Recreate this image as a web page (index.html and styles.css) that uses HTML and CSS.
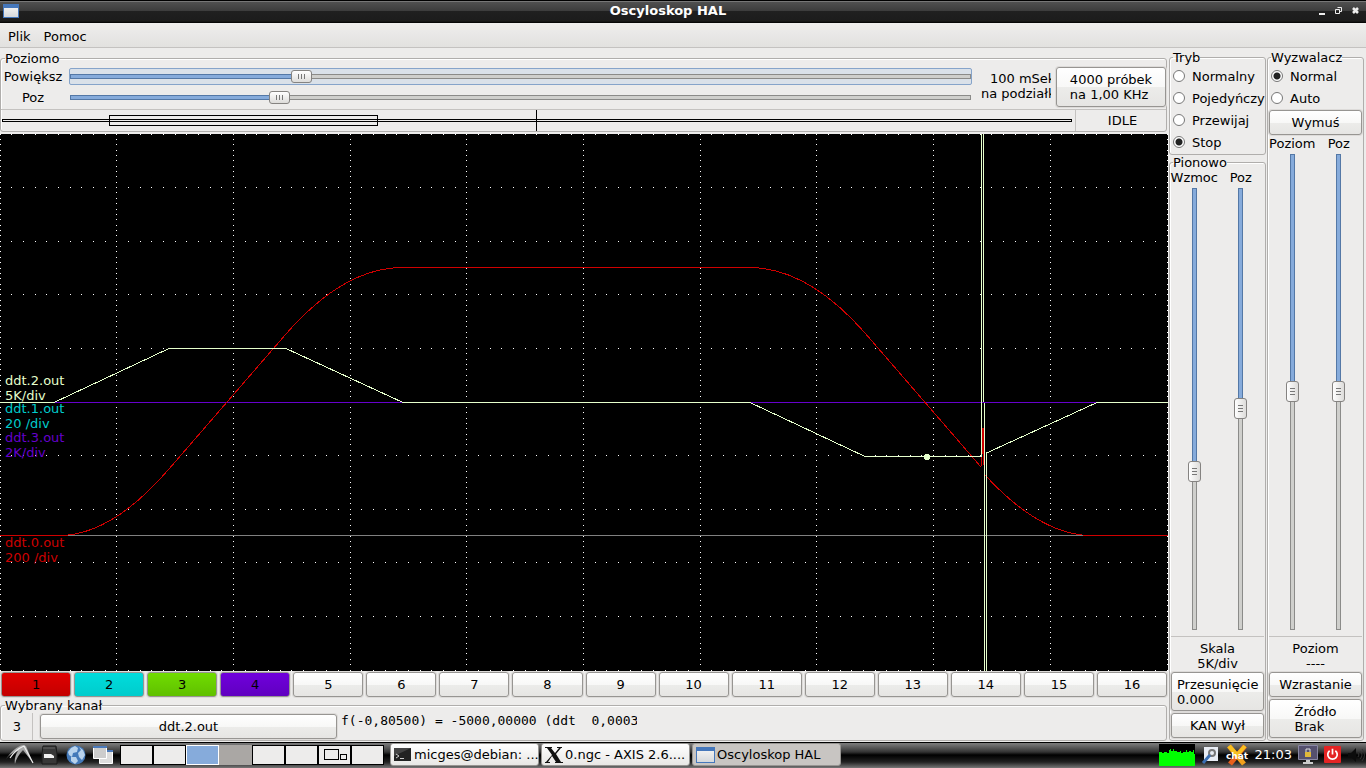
FILE: index.html
```html
<!DOCTYPE html>
<html lang="pl">
<head>
<meta charset="utf-8">
<title>Oscyloskop HAL</title>
<link rel="stylesheet" href="styles.css">
</head>
<body>
<header class="titlebar">
  <span class="win-icon"></span>
  <h1 class="title">Oscyloskop HAL</h1>
  <div class="win-buttons">
    <button class="win-btn" aria-label="Minimalizuj"><svg width="9" height="9" viewBox="0 0 9 9"><path d="M2 7h6v2H2z" fill="#eee"/></svg></button>
    <button class="win-btn" aria-label="Przywróć"><svg width="9" height="9" viewBox="0 0 9 9"><path d="M3.500 1.500h4v4h-2M1.500 3.500h4v4h-4z" fill="none" stroke="#eee"/></svg></button>
    <button class="win-btn" aria-label="Zamknij"><svg width="9" height="9" viewBox="0 0 9 9"><path d="M2 2l5 5M7 2l-5 5" stroke="#eee" stroke-width="2.600"/></svg></button>
  </div>
</header>
<nav class="menubar">
  <button class="menu">Plik</button>
  <button class="menu">Pomoc</button>
</nav>
<main class="workspace">
  <section class="left">
    <fieldset class="group horizontal">
      <legend>Poziomo</legend>
      <div class="horiz-top">
        <div class="horiz-sliders">
          <label for="zoom">Powiększ</label>
          <span class="focus"><input class="hs" id="zoom" type="range" min="0" max="1000" value="250" style="--fill:26%"></span>
          <label for="hpos">Poz</label>
          <span class="nofocus"><input class="hs" id="hpos" type="range" min="0" max="1000" value="225" style="--fill:23%"></span>
        </div>
        <div class="timebase"><span>100 mSek</span><span>na podziałkę</span></div>
        <button class="btn samples"><span>4000 próbek<br>na 1,00 KHz</span></button>
      </div>
      <div class="horiz-bottom">
        <div class="record">
          <svg class="record-svg" viewBox="0 0 1074 23" preserveAspectRatio="none" shape-rendering="crispEdges">
            <path d="M1.500 9.500h1069v2h-1069zM108.500 5.500h268v10h-268zM535.500 0v21" fill="none" stroke="#000"/>
          </svg>
        </div>
        <div class="state">IDLE</div>
      </div>
    </fieldset>
    <div class="scope">
      <svg class="scope-svg" viewBox="0 0 1168 537" preserveAspectRatio="none" shape-rendering="crispEdges">
        <path id="grid" fill="none" stroke="#fff"/>
        <path d="M0 401.500H1168" fill="none" stroke="#808080"/>
        <path d="M0 268.500H1168" fill="none" stroke="#6600cc"/>
        <path d="M0 401.500H60Q112 401 169 335L286 200Q344 133.500 403 133.500H750Q808 134 865 199L981 333L982 295V320L983 294V320L985 341Q1040 401 1091 401.500" fill="none" stroke="#d00000"/>
        <path d="M1085 401.500H1168" fill="none" stroke="#d00000"/>
        <path d="M0 268.500H54L169 214.500H286L403 268.500H750L865 322.500H981.500V0M983.500 0V268M984.500 269V537M986.500 537V319L1097 268.500H1168" fill="none" stroke="#e6ffcc"/>
        <circle cx="927" cy="323" r="3" fill="#e6ffcc"/>
      </svg>
      <div class="traces">
        <div class="trace t2">ddt.2.out<br>5K/div</div>
        <div class="trace t1">ddt.1.out<br>20 /div</div>
        <div class="trace t3">ddt.3.out<br>2K/div</div>
        <div class="trace t0">ddt.0.out<br>200 /div</div>
      </div>
    </div>
    <div class="channels">
      <button class="btn c1">1</button><button class="btn c2">2</button><button class="btn c3">3</button><button class="btn c4">4</button><button class="btn">5</button><button class="btn">6</button><button class="btn">7</button><button class="btn">8</button><button class="btn">9</button><button class="btn">10</button><button class="btn">11</button><button class="btn">12</button><button class="btn">13</button><button class="btn">14</button><button class="btn">15</button><button class="btn">16</button>
    </div>
    <fieldset class="group selected">
      <legend>Wybrany kanał</legend>
      <div class="selected-row">
        <span class="number">3</span>
        <button class="btn source">ddt.2.out</button>
        <output class="readout">f(-0,80500) = -5000,00000 (ddt  0,0003)</output>
      </div>
    </fieldset>
  </section>
  <aside class="mid">
    <fieldset class="group mode">
      <legend>Tryb</legend>
      <label class="radio"><input type="radio" name="mode">Normalny</label>
      <label class="radio"><input type="radio" name="mode">Pojedyńczy</label>
      <label class="radio"><input type="radio" name="mode">Przewijaj</label>
      <label class="radio"><input type="radio" name="mode" checked>Stop</label>
    </fieldset>
    <fieldset class="group vertical">
      <legend>Pionowo</legend>
      <div class="vsliders">
        <div class="vcol"><label for="gain">Wzmoc</label><input class="vs" id="gain" type="range" min="0" max="1000" value="649" style="--fill:64%"></div>
        <div class="vcol"><label for="vpos">Poz</label><input class="vs" id="vpos" type="range" min="0" max="1000" value="498" style="--fill:50%"></div>
      </div>
      <div class="value">Skala<br>5K/div</div>
      <button class="btn tall left-text"><span>Przesunięcie<br>0.000</span></button>
      <button class="btn">KAN Wył</button>
    </fieldset>
  </aside>
  <aside class="right">
    <fieldset class="group trigger">
      <legend>Wyzwalacz</legend>
      <label class="radio"><input type="radio" name="trig" checked>Normal</label>
      <label class="radio"><input type="radio" name="trig">Auto</label>
      <button class="btn force">Wymuś</button>
      <div class="vsliders">
        <div class="vcol"><label for="tlevel">Poziom</label><input class="vs" id="tlevel" type="range" min="0" max="1000" value="499" style="--fill:50%"></div>
        <div class="vcol"><label for="tpos">Poz</label><input class="vs" id="tpos" type="range" min="0" max="1000" value="499" style="--fill:50%"></div>
      </div>
      <div class="value">Poziom<br>----</div>
      <button class="btn">Wzrastanie</button>
      <button class="btn tall"><span>Źródło<br>Brak</span></button>
    </fieldset>
  </aside>
</main>
<footer class="taskbar">
  <div class="launchers">
    <button class="launch" aria-label="Menu"><svg width="32" height="22" viewBox="0 0 32 22"><path d="M4 15C9 8 15 2 21 1L24 2L31 19L21 6C17 10 14 15 13 20C12 15 14 10 16 7C11 8 7 11 4 15Z" fill="#a8a8a8"/><path d="M8 14C12 8 17 4 22 2L31 19" fill="none" stroke="#eee" stroke-width="1.200"/></svg></button>
    <button class="launch" aria-label="Pliki"><svg width="18" height="20" viewBox="0 0 18 20"><path d="M2 1h13l1 8v10H1V9z" fill="#383838" stroke="#1a1a1a"/><path d="M2 3h12" stroke="#666"/><path d="M3 13V9h7l3 2v2z" fill="#f2f2f2"/></svg></button>
    <button class="launch" aria-label="Przeglądarka"><svg width="20" height="20" viewBox="0 0 20 20"><circle cx="10" cy="10" r="9.500" fill="#4479b9"/><path d="M2 7l3-4 4-2 3 2-1 4-4 1-1 4-3-2zM13 2l4 3 2 5-3 5-3-3-1-4 3-3zM5 12l5 0 2 4-3 3-4-3z" fill="#b8d2ec"/></svg></button>
    <button class="launch" aria-label="Pulpit"><svg width="20" height="18" viewBox="0 0 20 18"><path d="M6.500 5.500h13v12h-13z" fill="#ddd" stroke="#fff"/><path d="M6 4h14v2H6z" fill="#4b7abb"/><path d="M.500.500h13v12H.500z" fill="#ccc" stroke="#fff"/><path d="M0 0h14v2H0z" fill="#4b7abb"/></svg></button>
  </div>
  <div class="pager">
    <button class="desk" aria-label="1"></button><button class="desk" aria-label="2"></button><button class="desk current" aria-label="3"></button><button class="desk busy" aria-label="4"></button><button class="desk" aria-label="5"></button><button class="desk" aria-label="6"></button><button class="desk" aria-label="7"><svg width="26" height="14" viewBox="0 0 26 14" shape-rendering="crispEdges"><path d="M2.500 1.500h14v10h-14zM18.500 6.500h6v5h-6z" fill="none" stroke="#000"/></svg></button><button class="desk" aria-label="8"></button>
  </div>
  <div class="tasks">
    <button class="task"><svg width="18" height="16" viewBox="0 0 18 16"><path d="M0 1h17v13H0z" fill="#222"/><path d="M0 1h17L0 9z" fill="#444"/><path d="M2 7l3 2-3 2M6 11.500h4" fill="none" stroke="#ccc"/></svg><span>micges@debian: ...</span></button>
    <button class="task"><svg width="18" height="18" viewBox="0 0 18 18"><path d="M0 1h7v1H6l4 5 4-5h-2V1h5v1h-1l-5 6 5 8h2v1h-8v-1h1l-4-6-4 6h2v1H0v-1h1l6-7-5-7H0z" fill="#111"/></svg><span>0.ngc - AXIS 2.6....</span></button>
    <button class="task active"><span class="win-icon wide"></span><span>Oscyloskop HAL</span></button>
  </div>
  <div class="tray">
    <svg width="36" height="22" viewBox="0 0 36 22" shape-rendering="crispEdges"><path d="M0 0h36v22H0z"/><path d="M0 8h3v1h2V8h3v1h2V6h1V5h1v2h2V5h1v2h3v1h3V7h1v2h2V8h3V6h1v2h2V7h2v1h2V6h1v4h1v12H0z" fill="#0f0"/></svg>
    <svg width="18" height="18" viewBox="0 0 18 18"><path d="M3 1h14v14H3z" fill="#e8ecf4"/><circle cx="11" cy="7" r="3" fill="none" stroke="#777" stroke-width="2"/><path d="M9 9l-7 8" stroke="#3b6fb3" stroke-width="3"/></svg>
    <svg width="24" height="22" viewBox="0 0 24 22"><path d="M20 2L5 20" stroke="#e8601c" stroke-width="5"/><path d="M4 2l15 18" stroke="#f2a01c" stroke-width="5"/><path d="M4 2l8 9L20 2" fill="none" stroke="#f8c020" stroke-width="4"/><text x="12" y="15" text-anchor="middle" class="chat">chat</text></svg>
    <time class="clock">21:03</time>
    <svg width="20" height="20" viewBox="0 0 20 20"><path d="M.500.500h19v14H.500z" fill="#55506e" stroke="#8a88a4"/><path d="M7 7h6v5H7z" fill="#e0b83a"/><path d="M8 7V4h4v3" fill="none" stroke="#ddd"/><path d="M8 15h4v2h3v2H5v-2h3z" fill="#ccc"/></svg>
    <svg width="17" height="17" viewBox="0 0 18 18"><rect width="18" height="18" rx="1" fill="#e42424"/><path d="M6 5a5 5 0 1 0 6 0M9 3v6" fill="none" stroke="#fff" stroke-width="1.800"/></svg>
    <svg width="18" height="16" viewBox="0 0 18 16"><path d="M1 6h3l5-5v14l-5-5H1z" fill="#0c0c0c"/><path d="M11 6q2 2 0 4M13 4q4 4 0 8M15 2q5 6 0 12" fill="none" stroke="#333"/></svg>
  </div>
</footer>
<script src="grid.js"></script>
</body>
</html>
```
FILE: grid.js
```js
// Graticule: 10 x 10 divisions, ten dots per division.
const w = 1167, h = 536;
let d = "";
for (let line = 0; line <= 10; line++) {
  const y = Math.floor(line * h / 10) + 0.5;
  const x = Math.floor(line * w / 10);
  for (let dot = 0; dot <= 100; dot++) {
    d += `M${Math.floor(dot * w / 100)} ${y}h1`;
    d += `M${x} ${Math.floor(dot * h / 100) + 0.5}h1`;
  }
}
document.getElementById("grid").setAttribute("d", d);
```
FILE: styles.css
```css
* { box-sizing: border-box; }
body {
  margin: 0;
  height: 100vh;
  display: flex;
  flex-direction: column;
  overflow: hidden;
  background: #edeceb;
  color: #000;
  font: 13px/15px "DejaVu Sans", sans-serif;
}
button { font: inherit; color: inherit; padding: 0; margin: 0; border: 0; background: none; }
svg { display: block; flex: none; }

.titlebar {
  flex: none;
  height: 23px;
  display: flex;
  align-items: center;
  padding: 0 6px 2px 3px;
  background: linear-gradient(#000 0 1px, #777 1px 2px, #505050 2px, #3c3c3c 11px, #202020 11px, #1c1c1c 21px, #000);
}
.win-icon {
  flex: none;
  width: 16px;
  height: 14px;
  border: 1px solid #4577bb;
  background: linear-gradient(#4577bb 0 3px, #f0f0f0 3px, #d5d8dc);
}
.wide { width: 19px; height: 16px; }
.title { flex: 1; margin: 0; text-align: center; color: #fff; font-size: 13px; font-weight: bold; }
.win-buttons { display: flex; gap: 8px; }

.menubar {
  flex: none;
  height: 25px;
  display: flex;
  align-items: center;
  gap: 13px;
  padding: 2px 0 0 8px;
  border-bottom: 1px solid #c4c2c0;
  background: linear-gradient(#efeeed, #e2e1df);
}

.workspace {
  flex: 1;
  min-height: 0;
  display: grid;
  grid-template-columns: minmax(0, 1fr) 97px 97px;
  gap: 0 1px;
  padding: 2px 2px 1px 0;
}
.left, .mid, .right { display: flex; flex-direction: column; min-width: 0; min-height: 0; }
.group {
  margin: 0;
  padding: 0 1px;
  min-width: 0;
  border: 1px solid #b0aeac;
  border-radius: 3px;
  box-shadow: inset 1px 1px #fff;
}
.group legend { padding: 0; margin-left: 2px; }
.btn {
  flex: none;
  height: 25px;
  border: 1px solid #979592;
  border-radius: 3px;
  background: linear-gradient(#fff, #f8f8f7 50%, #ececea 51%, #e6e5e3);
  box-shadow: 0 0 0 1px #dddbd9;
  text-align: center;
}
.btn span { display: inline-block; text-align: left; }

.horizontal { flex: none; height: 81px; margin-top: 1px; margin-right: 1px; padding: 0; }
.horizontal legend { margin-left: 4px; }
.horiz-top { display: flex; height: 43px; }
.horiz-sliders {
  flex: 1;
  display: grid;
  grid-template-columns: 65px 1fr;
  grid-template-rows: 20px 22px;
  align-items: center;
  text-align: center;
}
.horiz-sliders label { margin-right: 1px; }
.focus, .nofocus { display: flex; padding: 0 1px; margin-left: 3px; }
.focus { border: 1px solid #86a4ca; border-radius: 2px; background: #dae1e9; height: 17px; align-items: center; padding: 0; }
.timebase { flex: none; width: 70px; margin: 5px 5px 0 9px; overflow: hidden; white-space: nowrap; }
.timebase span { display: block; }
.timebase span:first-child { padding-left: 9px; }
.samples { width: 110px; height: 40px; margin-top: 1px; }
.horiz-bottom { display: flex; height: 22px; border-top: 1px solid #c4c2c0; }
.record { flex: 1; min-width: 0; }
.record-svg { width: 100%; height: 23px; }
.state { width: 91px; padding-top: 3px; padding-left: 3px; text-align: center; border-left: 1px solid #c4c2c0; }

input[type=range] { appearance: none; margin: 0; background: none; }
.hs { width: 100%; height: 14px; }
.hs::-webkit-slider-runnable-track {
  height: 5px;
  border: 1px solid transparent;
  background:
    linear-gradient(to right, #86abdb var(--fill), #cfcfcc var(--fill)) padding-box,
    linear-gradient(to right, #5478a6 var(--fill), #8b8b89 var(--fill)) border-box;
}
.hs::-webkit-slider-thumb {
  appearance: none;
  width: 21px;
  height: 13px;
  margin-top: -5px;
  border: 1px solid #858381;
  border-radius: 3px;
  background:
    repeating-linear-gradient(to right, #777 0 1px, transparent 1px 3px) 6px 3px / 7px 5px no-repeat,
    linear-gradient(#fff, #dddcda);
}
.vs { flex: 1; min-height: 0; width: 14px; writing-mode: vertical-lr; }
.vs::-webkit-slider-runnable-track {
  width: 5px;
  border: 1px solid transparent;
  background:
    linear-gradient(#86abdb var(--fill), #cfcfcc var(--fill)) padding-box,
    linear-gradient(#5478a6 var(--fill), #8b8b89 var(--fill)) border-box;
}
.vs::-webkit-slider-thumb {
  appearance: none;
  width: 13px;
  height: 21px;
  margin-left: -5px;
  border: 1px solid #858381;
  border-radius: 3px;
  background:
    repeating-linear-gradient(#777 0 1px, transparent 1px 3px) 3px 6px / 5px 7px no-repeat,
    linear-gradient(to right, #fff, #dddcda);
}

.scope { flex: 1; min-height: 0; position: relative; margin-top: 2px; background: #000; }
.scope-svg { width: 100%; height: 100%; }
.traces { position: absolute; inset: 0; }
.trace { position: absolute; left: 5px; }
.t2 { top: 44.500%; color: #e6ffcc; }
.t1 { top: 49.700%; color: #00cccc; }
.t3 { top: 55.100%; color: #6600cc; }
.t0 { top: 74.600%; color: #cc0000; }

.channels { flex: none; display: grid; grid-template-columns: repeat(16, 1fr); gap: 3px; padding: 1px; }
.c1 { background: linear-gradient(#e00000, #c40000); }
.c2 { background: linear-gradient(#00dcdc, #00cccc); }
.c3 { background: linear-gradient(#70dc00, #60c000); }
.c4 { background: linear-gradient(#7000dc, #6000c0); }

.selected { flex: none; height: 43px; margin-right: 1px; }
.selected legend { margin-left: 3px; }
.selected-row { display: flex; height: 27px; }
.number { width: 31px; padding-top: 6px; text-align: center; border-right: 1px solid #c4c2c0; }
.source { width: 297px; margin-left: 7px; margin-top: 1px; }
.readout { width: 296px; margin-left: 4px; overflow: hidden; white-space: pre; font: 13px/15px "DejaVu Sans Mono", monospace; }

.mode { flex: none; height: 105px; }
.radio { display: flex; align-items: center; gap: 7px; height: 22px; white-space: nowrap; }
.radio input { appearance: none; flex: none; width: 12px; height: 12px; margin: 0 0 0 2px; border: 1px solid #777; border-radius: 50%; background: #fff; }
.radio input:checked { background: radial-gradient(circle, #222 0 3px, #fff 4px); }
.force { margin-top: 1px; margin-bottom: 1px; }
.vertical, .trigger { flex: 1; min-height: 0; display: flex; flex-direction: column; padding-bottom: 2px; }
.vsliders { flex: 1; min-height: 0; display: grid; grid-template-columns: 1fr 1fr; grid-template-rows: minmax(0, 1fr); }
.vcol { display: flex; flex-direction: column; align-items: center; gap: 3px; min-height: 0; min-width: 0; }
.value { flex: none; height: 36px; margin-top: 6px; padding-top: 4px; text-align: center; border-top: 1px solid #c4c2c0; }
.tall { height: 39px; }
.tall + .btn, .btn + .tall { margin-top: 2px; }
.left-text { text-align: left; padding-left: 5px; }

.taskbar {
  flex: none;
  height: 26px;
  display: flex;
  align-items: center;
  padding-bottom: 1px;
  background: linear-gradient(#000 0 1px, #777 1px 2px, #333 10px, #000 13px, #222 20px, #777);
}
.launchers { display: flex; align-items: center; gap: 7px; width: 120px; padding-left: 2px; }
.pager { display: flex; width: 264px; height: 20px; }
.desk { flex: 1; border: 1px solid #000; background: #edeceb; display: flex; align-items: center; justify-content: center; }
.current { background: #86abdb; border-color: #fff; }
.busy { background: #aaa7a4; border-color: #aaa7a4; }
.tasks { display: flex; gap: 2px; margin-left: 6px; }
.task {
  width: 149px;
  height: 23px;
  display: flex;
  align-items: center;
  gap: 2px;
  padding-left: 3px;
  border: 1px solid #979592;
  border-radius: 3px;
  background: linear-gradient(#fff, #e8e7e5);
  white-space: nowrap;
}
.active { background: #c8c5c2; }
.tray { display: flex; align-items: center; gap: 6px; margin-left: auto; padding-right: 1px; color: #fff; }
.chat { font: bold 9px "DejaVu Sans", sans-serif; fill: #fff; }
```
